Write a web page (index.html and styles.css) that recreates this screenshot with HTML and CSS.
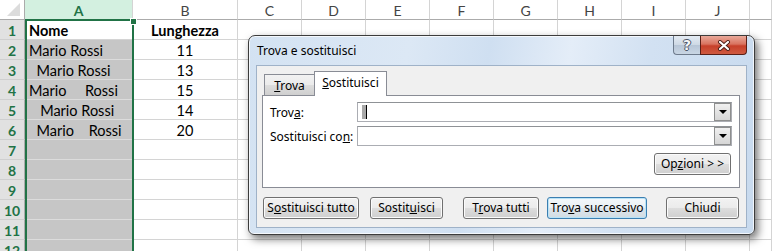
FILE: index.html
```html
<!DOCTYPE html>
<html lang="it">
<head>
<meta charset="utf-8">
<title>Trova e sostituisci</title>
<link rel="stylesheet" href="styles.css">
</head>
<body>
<div class="sheet">
  <div class="c hd corner"><span class="tri"></span></div><div class="c hd sel">A</div><div class="c hd">B</div><div class="c hd">C</div><div class="c hd">D</div><div class="c hd">E</div><div class="c hd">F</div><div class="c hd">G</div><div class="c hd">H</div><div class="c hd">I</div><div class="c hd">J</div><div class="c hd"></div>

  <div class="c rh">1</div><div class="c b">Nome</div><div class="c b ctr">Lunghezza</div><div class="c"></div><div class="c"></div><div class="c"></div><div class="c"></div><div class="c"></div><div class="c"></div><div class="c"></div><div class="c"></div><div class="c"></div>

  <div class="c rh">2</div><div class="c g">Mario Rossi</div><div class="c ctr">11</div><div class="c"></div><div class="c"></div><div class="c"></div><div class="c"></div><div class="c"></div><div class="c"></div><div class="c"></div><div class="c"></div><div class="c"></div>

  <div class="c rh">3</div><div class="c g">  Mario Rossi</div><div class="c ctr">13</div><div class="c"></div><div class="c"></div><div class="c"></div><div class="c"></div><div class="c"></div><div class="c"></div><div class="c"></div><div class="c"></div><div class="c"></div>

  <div class="c rh">4</div><div class="c g">Mario     Rossi</div><div class="c ctr">15</div><div class="c"></div><div class="c"></div><div class="c"></div><div class="c"></div><div class="c"></div><div class="c"></div><div class="c"></div><div class="c"></div><div class="c"></div>

  <div class="c rh">5</div><div class="c g">   Mario Rossi</div><div class="c ctr">14</div><div class="c"></div><div class="c"></div><div class="c"></div><div class="c"></div><div class="c"></div><div class="c"></div><div class="c"></div><div class="c"></div><div class="c"></div>

  <div class="c rh">6</div><div class="c g">  Mario    Rossi</div><div class="c ctr">20</div><div class="c"></div><div class="c"></div><div class="c"></div><div class="c"></div><div class="c"></div><div class="c"></div><div class="c"></div><div class="c"></div><div class="c"></div>

  <div class="c rh">7</div><div class="c g"></div><div class="c"></div><div class="c"></div><div class="c"></div><div class="c"></div><div class="c"></div><div class="c"></div><div class="c"></div><div class="c"></div><div class="c"></div><div class="c"></div>

  <div class="c rh">8</div><div class="c g"></div><div class="c"></div><div class="c"></div><div class="c"></div><div class="c"></div><div class="c"></div><div class="c"></div><div class="c"></div><div class="c"></div><div class="c"></div><div class="c"></div>

  <div class="c rh">9</div><div class="c g"></div><div class="c"></div><div class="c"></div><div class="c"></div><div class="c"></div><div class="c"></div><div class="c"></div><div class="c"></div><div class="c"></div><div class="c"></div><div class="c"></div>

  <div class="c rh">10</div><div class="c g"></div><div class="c"></div><div class="c"></div><div class="c"></div><div class="c"></div><div class="c"></div><div class="c"></div><div class="c"></div><div class="c"></div><div class="c"></div><div class="c"></div>

  <div class="c rh">11</div><div class="c g"></div><div class="c"></div><div class="c"></div><div class="c"></div><div class="c"></div><div class="c"></div><div class="c"></div><div class="c"></div><div class="c"></div><div class="c"></div><div class="c"></div>

  <div class="c rh">12</div><div class="c g"></div><div class="c"></div><div class="c"></div><div class="c"></div><div class="c"></div><div class="c"></div><div class="c"></div><div class="c"></div><div class="c"></div><div class="c"></div><div class="c"></div>
</div>

<div class="selbox"></div>
<div class="handle"></div>

<div class="dlg">
  <div class="title">
    <span class="title-text">Trova e sostituisci</span>
    <div class="ctrls">
      <div class="help"><span>?</span></div>
      <div class="close">
        <svg width="14" height="11" viewBox="0 0 14 11">
          <path d="M3 2 L11 9 M11 2 L3 9" stroke="#4a1d16" stroke-width="4" stroke-linecap="round"/>
          <path d="M3 2 L11 9 M11 2 L3 9" stroke="#ffffff" stroke-width="2.2" stroke-linecap="round"/>
        </svg>
      </div>
    </div>
  </div>
  <div class="client">
    <div class="tabs">
      <div class="tab"><u>T</u>rova</div>
      <div class="tab active"><u>S</u>ostituisci</div>
    </div>
    <div class="panel">
      <div class="frow">
        <span class="lbl">Trov<u>a</u>:</span>
        <div class="inp"><span class="selblk"></span><span class="caret"></span><span class="dd"><span class="arr"></span></span></div>
      </div>
      <div class="frow">
        <span class="lbl">Sostituisci co<u>n</u>:</span>
        <div class="inp"><span class="dd"><span class="arr"></span></span></div>
      </div>
      <div class="optrow">
        <div class="btn b-opt">Op<u>z</u>ioni &gt; &gt;</div>
      </div>
    </div>
    <div class="btnrow">
      <div class="btn b1">S<u>o</u>stituisci tutto</div>
      <div class="btn b2">Sostit<u>u</u>isci</div>
      <div class="btn b3">T<u>r</u>ova tutti</div>
      <div class="btn b4 def">Tro<u>v</u>a successivo</div>
      <div class="btn b5">Chiudi</div>
    </div>
  </div>
</div>
</body>
</html>
```

FILE: styles.css
```css
html, body {
  margin: 0;
  padding: 0;
}
body {
  width: 772px;
  height: 251px;
  overflow: hidden;
  position: relative;
  background: #ffffff;
  font-family: Lato, "Liberation Sans", sans-serif;
}

/* ---------- sheet ---------- */
.sheet {
  display: grid;
  grid-template-columns: 25px 108px 105px repeat(8, 64px) 22px;
  grid-auto-rows: 20px;
}
.c {
  box-sizing: border-box;
  border-right: 1px solid #d4d4d4;
  border-bottom: 1px solid #d4d4d4;
  font-size: 14.5px;
  line-height: 22px;
  padding-left: 4px;
  white-space: pre;
  overflow: hidden;
  color: #000;
}
.hd {
  background: #ffffff;
  color: #444444;
  text-align: center;
  padding-left: 0;
  line-height: 21px;
  font-size: 14px;
  border-bottom-color: #ababab;
}
.hd.sel {
  background: #d3f0e0;
  color: #217346;
  font-weight: bold;
  border-bottom: none;
}
.corner {
  position: relative;
  background: #ffffff;
  border-right-color: #ababab;
}
.tri {
  position: absolute;
  right: 4px;
  bottom: 3px;
  width: 0;
  height: 0;
  border-left: 13px solid transparent;
  border-bottom: 13px solid #dcdcdc;
}
.rh {
  background: #e1e1e1;
  color: #217346;
  font-weight: bold;
  font-size: 14px;
  text-align: center;
  padding-left: 0;
  border-right-color: #ababab;
  border-bottom-color: #cfcfcf;
}
.g {
  background: #c6c6c6;
  border-bottom-color: #dcdcdc;
}
.b { font-weight: bold; }
.ctr { text-align: center; padding-left: 0; }

.selbox {
  position: absolute;
  left: 25px;
  top: 19px;
  width: 109px;
  height: 260px;
  box-sizing: border-box;
  border: 2px solid #217346;
  border-bottom: none;
}
.handle {
  position: absolute;
  left: 130px;
  top: 18px;
  width: 5px;
  height: 5px;
  background: #217346;
  border: 1px solid #ffffff;
}

/* ---------- dialog ---------- */
.dlg {
  position: absolute;
  left: 248px;
  top: 35px;
  width: 507px;
  height: 200px;
  box-sizing: border-box;
  border: 1px solid #3c3c3c;
  border-radius: 7px 7px 6px 6px;
  padding: 0 7px 6px 7px;
  display: flex;
  flex-direction: column;
  background: linear-gradient(100deg, #d3e2f2 0%, #dce8f5 30%, #cfdff1 45%, #e4edf8 60%, #d2e1f2 75%, #c8daee 100%);
  box-shadow: inset 0 0 0 1px rgba(255,255,255,0.75), 3px 4px 9px rgba(0,0,0,0.55);
  font-family: "Segoe UI", "Noto Sans", sans-serif;
  font-size: 12px;
  color: #000;
}
.title {
  height: 29px;
  position: relative;
  display: flex;
  align-items: center;
  padding-left: 1px;
}
.title-text {
  margin-top: -1px;
}
.ctrls {
  position: absolute;
  top: 0;
  right: 0;
  display: flex;
}
.help {
  width: 27px;
  height: 19px;
  box-sizing: border-box;
  border: 1px solid #6e7b8c;
  border-top: none;
  border-right: none;
  border-radius: 0 0 0 4px;
  background: linear-gradient(#e4ebf3 0%, #cdd8e4 50%, #b7c5d6 51%, #c9d6e4 100%);
  display: flex;
  align-items: center;
  justify-content: center;
}
.help span {
  font-family: "DejaVu Sans", sans-serif;
  font-weight: bold;
  font-size: 14px;
  line-height: 1;
  color: #f4f6f8;
  text-shadow: 1px 0 0 #4b5566, -1px 0 0 #4b5566, 0 1px 0 #4b5566, 0 -1px 0 #4b5566;
}
.close {
  width: 47px;
  height: 19px;
  box-sizing: border-box;
  border: 1px solid #5a1f16;
  border-top: none;
  border-radius: 0 0 4px 0;
  background: linear-gradient(#e9a99a 0%, #d9735f 45%, #c7402a 55%, #cf5a40 100%);
  display: flex;
  align-items: center;
  justify-content: center;
}
.close svg { display: block; }

.client {
  flex: 1;
  box-sizing: border-box;
  border: 1px solid #9fb2c8;
  background: #f0f0f0;
  padding: 5px 6px 0 5px;
}
.tabs {
  display: flex;
  align-items: flex-end;
  height: 25px;
  padding-left: 2px;
  margin-bottom: -1px;
  position: relative;
  z-index: 1;
}
.tab {
  box-sizing: border-box;
  height: 21px;
  margin-bottom: 1px;
  width: 51px;
  margin-right: -1px;
  border: 1px solid #898c95;
  border-bottom: none;
  background: linear-gradient(#f2f2f2 0%, #ebebeb 50%, #dddddd 51%, #cfcfcf 100%);
  text-align: center;
  line-height: 20px;
  padding-top: 1px;
}
.tab.active {
  height: 25px;
  margin-bottom: 0;
  width: 73px;
  background: #ffffff;
  padding-top: 0;
  line-height: 22px;
}
.panel {
  box-sizing: border-box;
  height: 93px;
  border: 1px solid #898c95;
  background: #ffffff;
  padding: 6px 7px 0 7px;
}
.frow {
  display: flex;
  align-items: center;
  height: 20px;
  margin-bottom: 4px;
}
.lbl {
  width: 87px;
  flex: none;
}
.inp {
  flex: 1;
  height: 20px;
  box-sizing: border-box;
  border: 1px solid #abadb3;
  border-top-color: #8f9296;
  background: #ffffff;
  display: flex;
  align-items: center;
  position: relative;
}
.selblk {
  width: 4px;
  height: 14px;
  margin-left: 4px;
  background: #a9a9a9;
}
.caret {
  width: 1px;
  height: 14px;
  background: #000000;
}
.dd {
  margin-left: auto;
  width: 17px;
  height: 18px;
  box-sizing: border-box;
  border: 1px solid #8e8f8f;
  background: linear-gradient(#f0f0f0, #d6d6d6);
  display: flex;
  align-items: center;
  justify-content: center;
}
.arr {
  width: 0;
  height: 0;
  border-left: 4px solid transparent;
  border-right: 4px solid transparent;
  border-top: 4px solid #000000;
}
.optrow {
  display: flex;
  justify-content: flex-end;
  margin-top: 7px;
  padding-right: 1px;
}
.btn {
  box-sizing: border-box;
  height: 22px;
  border: 1px solid #707070;
  border-radius: 3px;
  background: linear-gradient(#f2f2f2 0%, #ebebeb 49%, #dddddd 50%, #cfcfcf 100%);
  box-shadow: inset 0 0 0 1px #fbfbfb;
  text-align: center;
  line-height: 19px;
  white-space: nowrap;
}
.b-opt { width: 77px; }
.btnrow {
  display: flex;
  margin-top: 9px;
}
.b1 { width: 96px; margin-left: 1px; }
.b2 { width: 73px; margin-left: 11px; }
.b3 { width: 76px; margin-left: 20px; }
.b4 { width: 100px; margin-left: 8px; }
.b5 { width: 73px; margin-left: 19px; }
.btn.def {
  border-color: #3c7fb1;
  box-shadow: inset 0 0 0 1px #b9e3f7;
  background: linear-gradient(#f4f8fb 0%, #eaf0f4 49%, #dde5eb 50%, #d2dce3 100%);
}
u { text-decoration: underline; text-underline-offset: 1px; }
```
